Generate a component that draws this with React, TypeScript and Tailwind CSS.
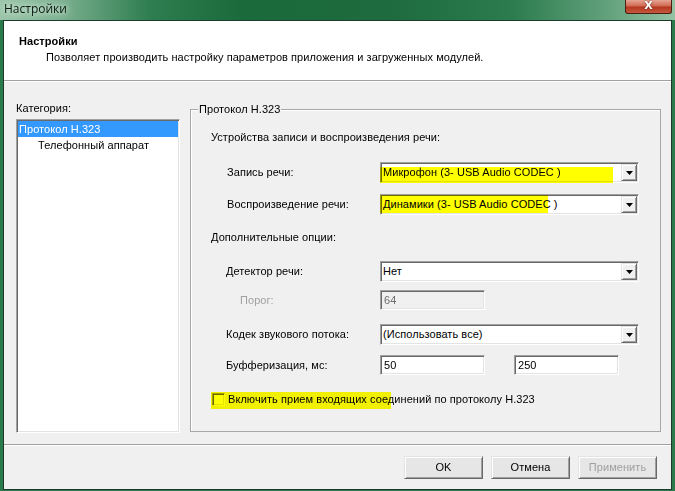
import React from "react";

const sunken =
  "border border-t-[#a0a0a0] border-l-[#a0a0a0] border-r-white border-b-white shadow-[inset_1px_1px_0_#696969,inset_-1px_-1px_0_#e3e3e3]";

const raised =
  "border border-t-[#e3e3e3] border-l-[#e3e3e3] border-r-[#696969] border-b-[#696969] shadow-[inset_1px_1px_0_#ffffff,inset_-1px_-1px_0_#a0a0a0]";

function Arrow() {
  return (
    <svg width="7" height="4" viewBox="0 0 7 4">
      <path d="M0 0h7L3.5 4z" fill="#000" />
    </svg>
  );
}

function Combo({ text, hl }: { text: string; hl?: string }) {
  return (
    <div className={`relative w-[259px] h-[21px] bg-white flex items-center ${sunken}`}>
      <span className="pl-[2px] leading-[13px]">{text}</span>
      <div className={`ml-auto mr-[1px] w-[16px] h-[17px] bg-[#f0f0f0] flex items-center justify-center ${raised}`}>
        <Arrow />
      </div>
      {hl && <div className={`absolute -left-[1px] bg-[#ffff00] mix-blend-multiply ${hl}`} />}
    </div>
  );
}

function TextBox({ text, disabled }: { text: string; disabled?: boolean }) {
  return (
    <div
      className={`w-[105px] h-[20px] flex items-center pl-[3px] ${sunken} ${
        disabled ? "bg-[#f0f0f0] text-[#6d6d6d]" : "bg-white"
      }`}
    >
      {text}
    </div>
  );
}

function Row({ label, indent, gray, children }: { label: string; indent: string; gray?: boolean; children: React.ReactNode }) {
  return (
    <div className="flex items-center">
      <div className={`w-[189px] ${indent} ${gray ? "text-[#a0a0a0]" : ""}`}>{label}</div>
      {children}
    </div>
  );
}

function Button({ label, disabled }: { label: string; disabled?: boolean }) {
  return (
    <button
      className={`w-[79px] h-[23px] bg-[#e6e6e6] ${raised} ${disabled ? "text-[#a0a0a0]" : "text-black"}`}
    >
      {label}
    </button>
  );
}

export default function App() {
  return (
    <div className="w-[675px] h-[491px] flex flex-col bg-[#2a7a4c] overflow-hidden font-['Liberation_Sans',Arial,sans-serif] text-[11px] leading-[13px] tracking-[0.06px] text-black">
      {/* title bar */}
      <div className="relative h-[20px] shrink-0 flex items-start pt-[1px] pl-[4px] bg-[linear-gradient(90deg,#9cc6aa_0%,#7cb090_9%,#2f7e51_22%,#1b6a3c_36%,#1d6b3e_58%,#2c7c4f_76%,#62a17c_90%,#94c3a4_100%)]">
        <span className="font-['Open_Sans',sans-serif] text-[12px] leading-[16px] tracking-normal text-[#0c1b12] [text-shadow:0_0_5px_#d8ecdf,0_0_8px_#d8ecdf]">
          Настройки
        </span>
        <div className="absolute right-[3px] top-0 w-[47px] h-[14px] rounded-b-[3px] border border-t-0 border-[#4a1e16] bg-[linear-gradient(180deg,#e6a493_0%,#d06a52_45%,#b4381f_55%,#c65a3e_100%)] flex items-start justify-center">
          <span className="text-white font-bold text-[11px] leading-[11px] font-['DejaVu_Sans',sans-serif] [text-shadow:0_0_2px_#5a1a10]">
            X
          </span>
        </div>
      </div>

      {/* client */}
      <div className="flex-1 mx-[3px] mb-[1px] border border-[#1b3a29] flex flex-col bg-[#f0f0f0]">
        <div className="h-[60px] shrink-0 bg-white border-b border-[#a0a0a0] pt-[14px]">
          <div className="pl-[15px] font-bold">Настройки</div>
          <div className="pl-[42px] mt-[3px]">
            Позволяет производить настройку параметров приложения и загруженных модулей.
          </div>
        </div>

        <div className="h-[364px] shrink-0 border-t border-white border-b border-b-[#a0a0a0] flex pl-[12px]">
          {/* category list */}
          <div className="w-[164px] pt-[20px]">
            <div>Категория:</div>
            <div className={`mt-[4px] h-[314px] bg-white p-[1px] ${sunken}`}>
              <div className="h-[16px] bg-[#3399ff] text-white flex items-center pl-[1px]">Протокол H.323</div>
              <div className="h-[17px] flex items-center pl-[20px]">Телефонный аппарат</div>
            </div>
          </div>

          {/* group */}
          <div className="ml-[10px] mt-[27px] w-[471px] h-[323px] relative border border-[#a8a8a8] shadow-[inset_1px_1px_0_#ffffff] flex flex-col">
            <span className="absolute -top-[7px] left-[7px] px-[1px] bg-[#f0f0f0]">Протокол H.323</span>

            <div className="mt-[21px] pl-[20px]">Устройства записи и воспроизведения речи:</div>

            <div className="mt-[18px]">
              <Row label="Запись речи:" indent="pl-[36px]">
                <Combo text="Микрофон (3- USB Audio CODEC )" hl="top-[4px] -bottom-[1px] w-[233px]" />
              </Row>
            </div>
            <div className="mt-[11px]">
              <Row label="Воспроизведение речи:" indent="pl-[36px]">
                <Combo text="Динамики (3- USB Audio CODEC )" hl="top-0 bottom-[1px] w-[168px]" />
              </Row>
            </div>

            <div className="mt-[16px] pl-[20px]">Дополнительные опции:</div>

            <div className="mt-[17px]">
              <Row label="Детектор речи:" indent="pl-[35px]">
                <Combo text="Нет" />
              </Row>
            </div>
            <div className="mt-[8px]">
              <Row label="Порог:" indent="pl-[49px]" gray>
                <TextBox text="64" disabled />
              </Row>
            </div>
            <div className="mt-[14px]">
              <Row label="Кодек звукового потока:" indent="pl-[35px]">
                <Combo text="(Использовать все)" />
              </Row>
            </div>
            <div className="mt-[10px]">
              <Row label="Буфферизация, мс:" indent="pl-[35px]">
                <div className="flex gap-[29px]">
                  <TextBox text="50" />
                  <TextBox text="250" />
                </div>
              </Row>
            </div>

            <div className="mt-[18px] pl-[21px] flex items-center relative">
              <div className={`w-[13px] h-[13px] bg-white ${sunken}`} />
              <span className="ml-[3px]">Включить прием входящих соединений по протоколу H.323</span>
              <div className="absolute left-[20px] -top-[1px] w-[180px] h-[17px] bg-[#ffff00] mix-blend-multiply" />
            </div>
          </div>
        </div>

        <div className="h-[44px] shrink-0 border-t border-white flex justify-end gap-[8px] pt-[10px] pr-[14px]">
          <Button label="OK" />
          <Button label="Отмена" />
          <Button label="Применить" disabled />
        </div>
      </div>
    </div>
  );
}
